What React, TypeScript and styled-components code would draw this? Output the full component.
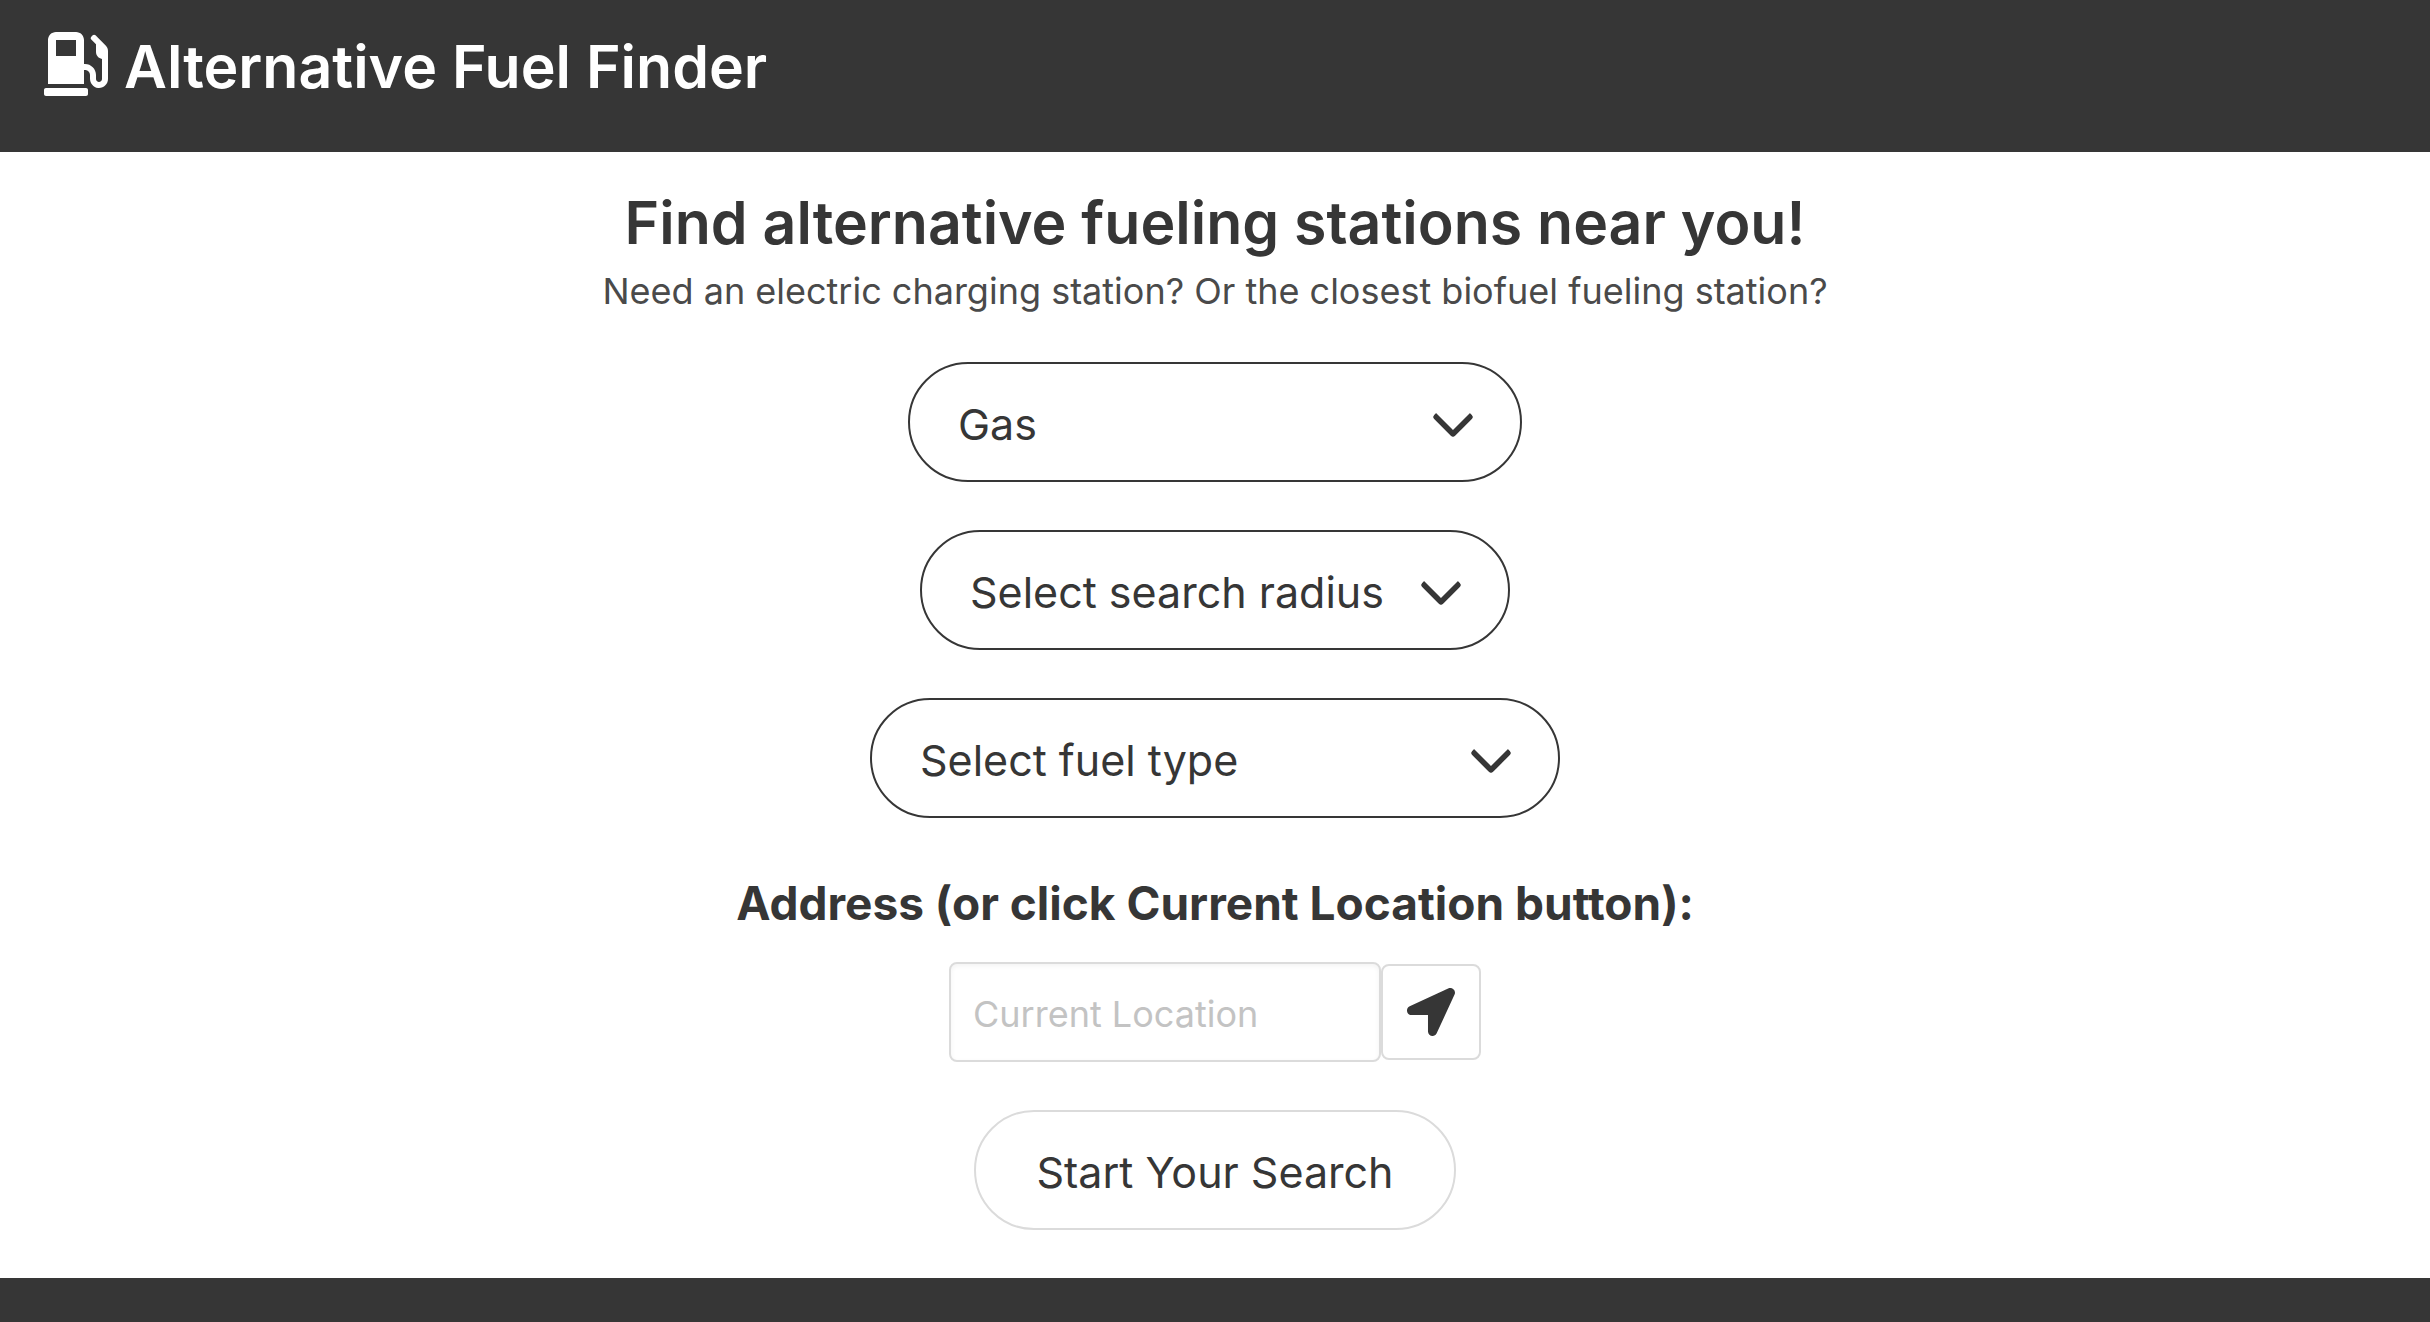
import React from 'react';
import styled, { createGlobalStyle } from 'styled-components';
import { FaGasPump, FaLocationArrow } from 'react-icons/fa';

const dark = '#363636';
const line = '#dbdbdb';

const GlobalStyle = createGlobalStyle`
  *, *::before, *::after { box-sizing: border-box; }
  body {
    margin: 0;
    background: #fff;
    color: ${dark};
    font-family: Inter, 'Liberation Sans', sans-serif;
    -webkit-font-smoothing: antialiased;
  }
`;

const Page = styled.div`
  display: flex;
  flex-direction: column;
  min-height: 100vh;
`;

const Header = styled.header`
  padding: 32px 44px 50px;
  background: ${dark};
  color: #fff;
`;

const Brand = styled.h1`
  display: flex;
  align-items: flex-start;
  gap: 16px;
  margin: 0;
  font-size: 59px;
  font-weight: 600;
  line-height: 70px;

  svg { font-size: 64px; }
`;

const Main = styled.main`
  display: flex;
  flex-direction: column;
  align-items: center;
  padding: 35px 48px 48px;
`;

const Title = styled.h2`
  margin: 0;
  font-size: 59px;
  font-weight: 600;
  line-height: 72px;
  text-align: center;
`;

const Subtitle = styled.p`
  margin: 0 0 39px;
  color: #4a4a4a;
  font-size: 36px;
  line-height: 64px;
  text-align: center;
`;

const SearchForm = styled.form`
  display: flex;
  flex-direction: column;
  align-items: center;
  gap: 48px;
`;

const SelectWrap = styled.div<{ $width: number }>`
  position: relative;
  width: ${(p) => p.$width}px;
  max-width: 100%;

  &::after {
    content: '';
    position: absolute;
    top: 50%;
    right: 54px;
    width: 30px;
    height: 30px;
    margin-top: -20px;
    border: 6px solid ${dark};
    border-top: 0;
    border-right: 0;
    border-radius: 4px;
    transform: rotate(-45deg);
    pointer-events: none;
  }
`;

const Select = styled.select`
  display: block;
  width: 100%;
  height: 120px;
  padding: 4px 100px 0 48px;
  border: 2px solid ${dark};
  border-radius: 60px;
  background: #fff;
  color: ${dark};
  font-family: inherit;
  font-size: 43px;
  line-height: 72px;
  appearance: none;
`;

const AddressField = styled.div`
  display: flex;
  flex-direction: column;
  align-items: center;
  gap: 22px;
`;

const AddressLabel = styled.label`
  font-size: 46px;
  font-weight: 700;
  line-height: 74px;
`;

const AddressRow = styled.div`
  display: flex;
  align-items: center;
`;

const AddressInput = styled.input`
  width: 432px;
  height: 100px;
  padding: 4px 22px 0;
  border: 2px solid ${line};
  border-radius: 8px;
  background: #fff;
  box-shadow: inset 0 2px 5px rgba(10, 10, 10, 0.05);
  color: ${dark};
  font-family: inherit;
  font-size: 36px;

  &::placeholder { color: #c3c3c3; opacity: 1; }
`;

const LocateButton = styled.button`
  display: flex;
  align-items: center;
  justify-content: center;
  width: 100px;
  height: 96px;
  padding: 0;
  border: 2px solid ${line};
  border-radius: 8px;
  background: #fff;
  color: ${dark};
  font-size: 48px;
`;

const SearchButton = styled.button`
  min-width: 482px;
  height: 120px;
  padding: 4px 48px 0;
  border: 2px solid ${line};
  border-radius: 60px;
  background: #fff;
  color: ${dark};
  font-family: inherit;
  font-size: 43px;
  line-height: 72px;
`;

const Footer = styled.footer`
  flex: 1;
  min-height: 44px;
  background: ${dark};
`;

const selects = [
  { label: 'Vehicle type', width: 614, options: ['Gas', 'Electric'] },
  { label: 'Search radius', width: 590, options: ['Select search radius', '5 miles', '10 miles', '25 miles'] },
  { label: 'Fuel type', width: 690, options: ['Select fuel type', 'Biodiesel', 'Ethanol', 'Propane'] },
];

export default function App() {
  return (
    <Page>
      <GlobalStyle />
      <Header>
        <Brand>
          <FaGasPump aria-hidden />
          Alternative Fuel Finder
        </Brand>
      </Header>
      <Main>
        <Title>Find alternative fueling stations near you!</Title>
        <Subtitle>Need an electric charging station? Or the closest biofuel fueling station?</Subtitle>
        <SearchForm onSubmit={(e) => e.preventDefault()}>
          {selects.map((s) => (
            <SelectWrap key={s.label} $width={s.width}>
              <Select aria-label={s.label}>
                {s.options.map((o) => (
                  <option key={o}>{o}</option>
                ))}
              </Select>
            </SelectWrap>
          ))}
          <AddressField>
            <AddressLabel htmlFor="address">Address (or click Current Location button):</AddressLabel>
            <AddressRow>
              <AddressInput id="address" type="text" placeholder="Current Location" />
              <LocateButton type="button" aria-label="Current Location">
                <FaLocationArrow aria-hidden />
              </LocateButton>
            </AddressRow>
          </AddressField>
          <SearchButton type="submit">Start Your Search</SearchButton>
        </SearchForm>
      </Main>
      <Footer />
    </Page>
  );
}
